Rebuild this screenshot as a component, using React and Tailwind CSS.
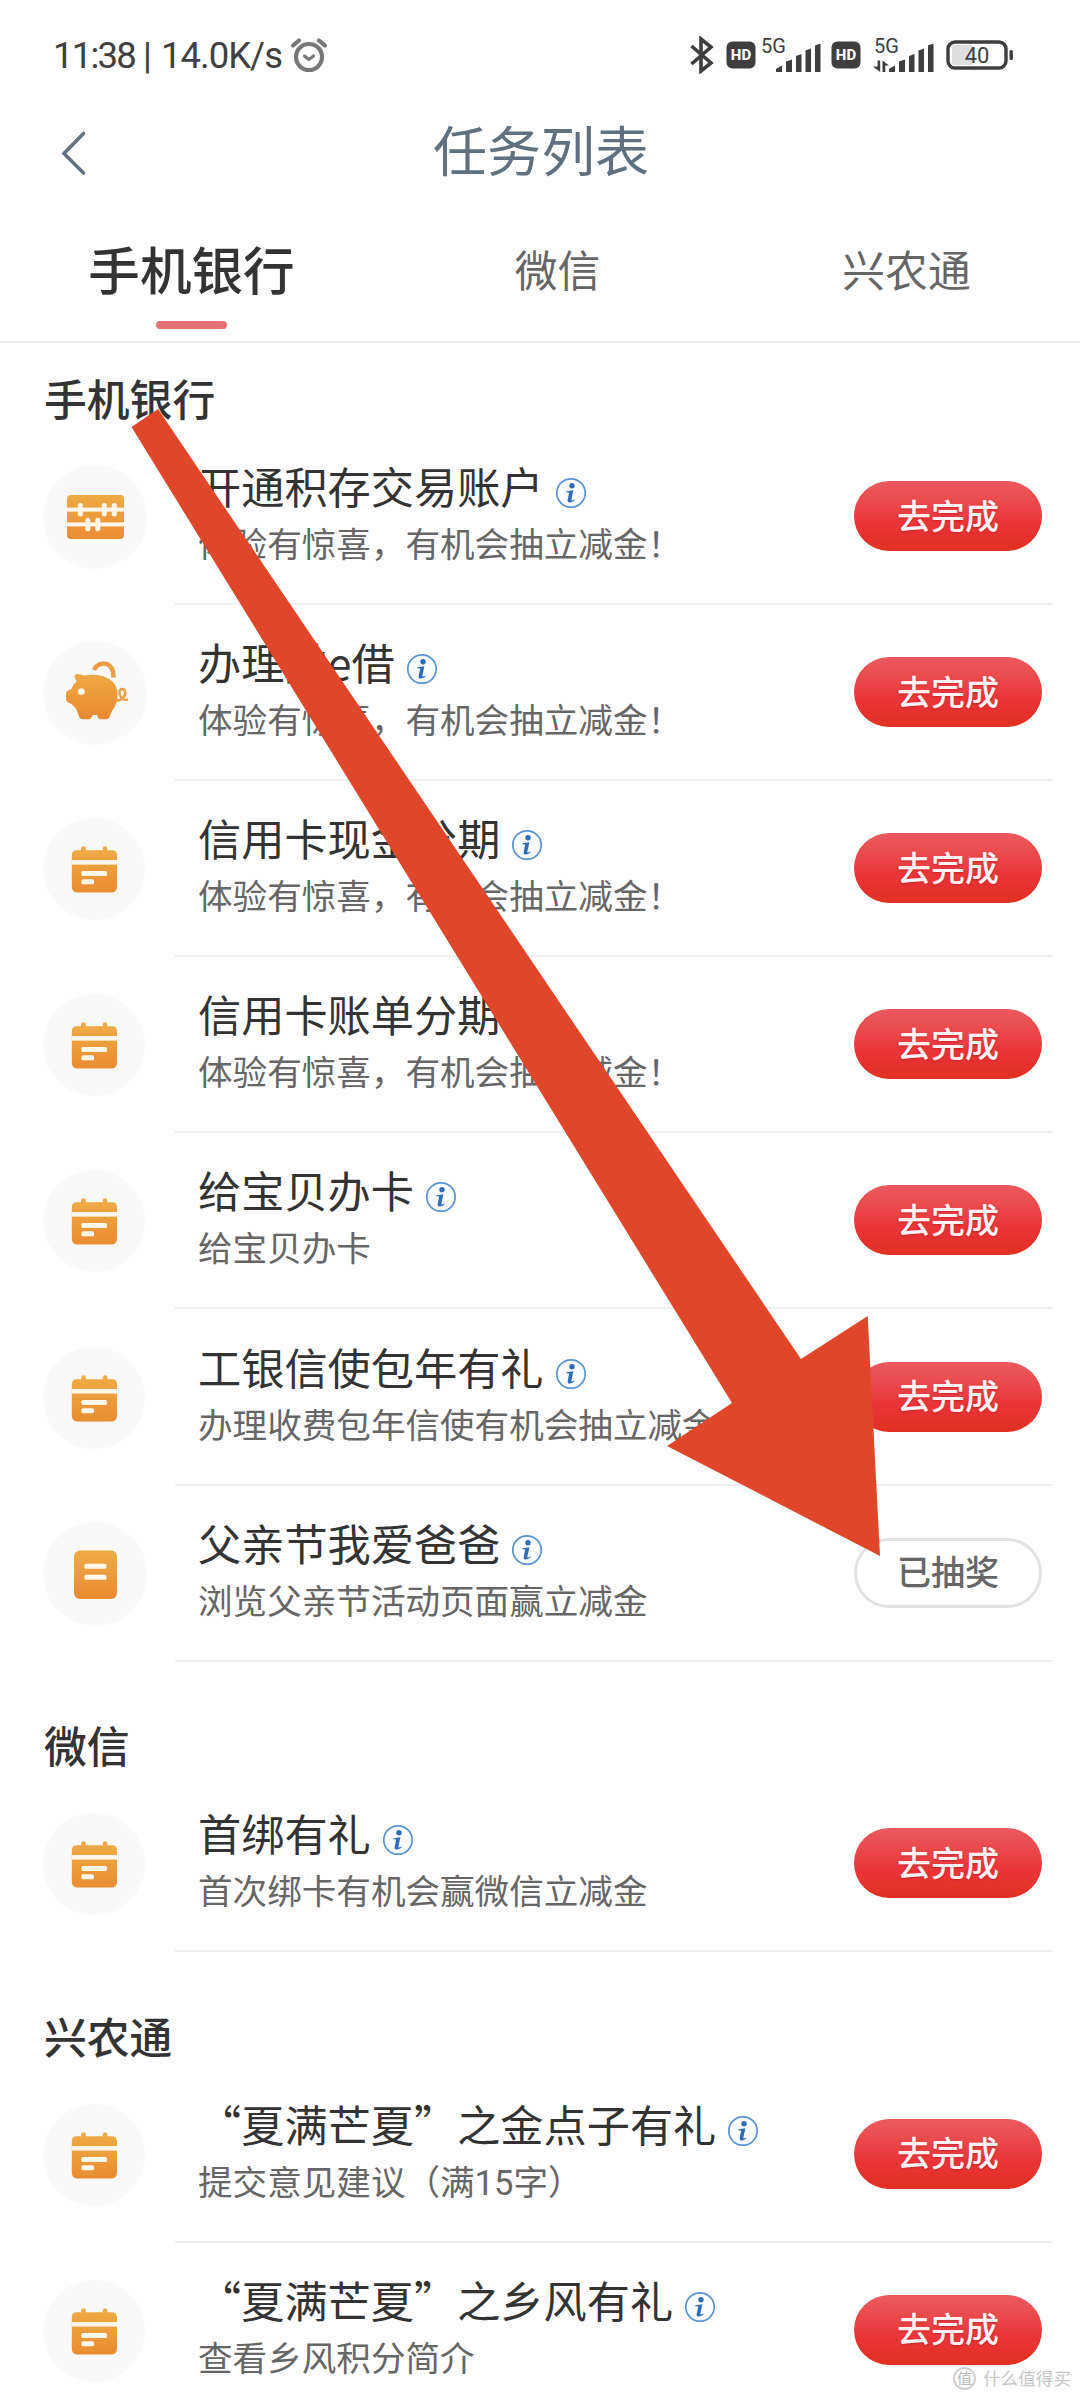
import React, { useState } from "react";

const tabs = [
  { name: "手机银行", width: "w-[382px]" },
  { name: "微信", width: "w-[350px]" },
  { name: "兴农通", width: "w-[348px]" },
];

const sections = [
  {
    title: "手机银行",
    tasks: [
      { icon: "abacus", name: "开通积存交易账户", desc: "体验有惊喜，有机会抽立减金！" },
      { icon: "pig", name: "办理融e借", desc: "体验有惊喜，有机会抽立减金！" },
      { icon: "calendar", name: "信用卡现金分期", desc: "体验有惊喜，有机会抽立减金！" },
      { icon: "calendar", name: "信用卡账单分期", desc: "体验有惊喜，有机会抽立减金！" },
      { icon: "calendar", name: "给宝贝办卡", desc: "给宝贝办卡" },
      { icon: "calendar", name: "工银信使包年有礼", desc: "办理收费包年信使有机会抽立减金" },
      { icon: "doc", name: "父亲节我爱爸爸", desc: "浏览父亲节活动页面赢立减金", done: true },
    ],
  },
  {
    title: "微信",
    tasks: [{ icon: "calendar", name: "首绑有礼", desc: "首次绑卡有机会赢微信立减金" }],
  },
  {
    title: "兴农通",
    tasks: [
      { icon: "calendar", name: "“夏满芒夏”之金点子有礼", desc: "提交意见建议（满15字）" },
      { icon: "calendar", name: "“夏满芒夏”之乡风有礼", desc: "查看乡风积分简介" },
    ],
  },
];

const AlarmIcon = () => (
  <svg width="38" height="38" viewBox="0 0 38 38" fill="none" stroke="#777" strokeWidth="4.2" strokeLinecap="round">
    <circle cx="19" cy="20" r="13" />
    <path d="M3 8.5 L9 3.5 M35 8.5 L29 3.5" />
    <path d="M14.5 19 L18.8 22.6 L23.5 19" strokeWidth="3.2" strokeLinejoin="round" />
  </svg>
);

const HdIcon = () => (
  <svg width="30" height="28" viewBox="0 0 30 28">
    <rect x="0.5" y="0.5" width="29" height="27" rx="6" fill="#3e3e3e" />
    <text x="15" y="19.3" textAnchor="middle" fontSize="15" fontWeight="800" fontFamily="Roboto, sans-serif" fill="#fff">
      HD
    </text>
  </svg>
);

const SignalIcon = ({ data }) => (
  <svg className="overflow-visible" width="60" height="38" viewBox="0 -2 60 38" fill="#3e3e3e">
    <text x="0" y="15" fontSize="20" fontFamily="Roboto, sans-serif">
      5G
    </text>
    {data && (
      <path d="M3.6 22.5h2.6v11.5L-1.2 28.5h4.8z M8.5 22.5L15 27.5h-3.7V34H8.5z" />
    )}
    <path d="M15 34v-3l6-3.5V34z M25 34V23.5l6-2V34z M35 34V18l5.5-2V34z M44.5 34V12.5l5.5-2V34z M54 34V7.5l5.5-2V34z" />
  </svg>
);

const BatteryIcon = () => (
  <svg width="68" height="30" viewBox="0 0 68 30">
    <rect x="6" y="5" width="21" height="20" rx="2" fill="#dedede" />
    <rect x="2" y="2" width="58" height="26" rx="7" fill="none" stroke="#3e3e3e" strokeWidth="3.4" />
    <rect x="63.5" y="10" width="3.4" height="10" rx="1.5" fill="#3e3e3e" />
    <text x="31" y="22.6" textAnchor="middle" fontSize="22" fontFamily="Roboto, sans-serif" fill="#3e3e3e">
      40
    </text>
  </svg>
);

const StatusBar = () => (
  <div className="flex h-[112px] items-center justify-between pl-[53px] pr-[66px]">
    <div className="flex items-center">
      <div className="flex w-[237px] whitespace-nowrap text-[36.5px] text-[#404040]">
        <span className="w-[90px] tracking-[-1.8px]">11:38</span>
        <span className="w-[18px]">|</span>
        <span className="tracking-[-1px]">14.0K/s</span>
      </div>
      <AlarmIcon />
    </div>
    <div className="flex items-center pb-[3px]">
      <svg className="mr-[12px]" width="24" height="38" viewBox="0 0 24 38" fill="none" stroke="#3e3e3e" strokeWidth="3.6">
        <path d="M1.5 10 L21 27 L11 35 V3 L21 11 L1.5 28" />
      </svg>
      <HdIcon />
      <span className="ml-[5px]">
        <SignalIcon />
      </span>
      <span className="ml-[10px]">
        <HdIcon />
      </span>
      <span className="ml-[13px]">
        <SignalIcon data />
      </span>
      <span className="ml-[12px]">
        <BatteryIcon />
      </span>
    </div>
  </div>
);

const InfoIcon = () => (
  <svg width="32" height="32" viewBox="0 0 32 32">
    <circle cx="16" cy="16" r="14.2" fill="#fafdff" stroke="#5b94cf" strokeWidth="1.7" />
    <circle cx="17" cy="8.8" r="2.7" fill="#2f6db8" />
    <path d="M11.5 14.2 L18.4 13.2 L16.3 23 Q16.4 24 19.6 22.4 L19.4 23.6 Q16 26.2 13.6 25.4 Q12.2 24.8 12.7 22.8 L14.2 15.6 L11.3 15.3 Z" fill="#2f6db8" />
  </svg>
);

const Gradient = ({ id }) => (
  <linearGradient id={id} x1="0" y1="25" x2="0" y2="78" gradientUnits="userSpaceOnUse">
    <stop offset="0" stopColor="#efae48" />
    <stop offset="1" stopColor="#e98a30" />
  </linearGradient>
);

const TaskIcon = ({ type }) => {
  if (type === "abacus") {
    return (
      <svg width="104" height="104" viewBox="0 0 104 104">
        <Gradient id="abacus" />
        <circle cx="52" cy="52" r="52" fill="#f9f9f9" />
        <rect x="24" y="30" width="57" height="44" rx="4" fill="url(#abacus)" />
        <g fill="#fff8ea">
          <rect x="24" y="42.6" width="57" height="4" />
          <rect x="24" y="57.4" width="57" height="4" />
          <rect x="34.8" y="38" width="5" height="13.4" rx="2.5" />
          <rect x="58.8" y="38" width="5" height="13.4" rx="2.5" />
          <rect x="68.8" y="38" width="5" height="13.4" rx="2.5" />
          <rect x="42.3" y="52.8" width="5" height="13.4" rx="2.5" />
          <rect x="52.3" y="52.8" width="5" height="13.4" rx="2.5" />
        </g>
      </svg>
    );
  }
  if (type === "pig") {
    return (
      <svg width="104" height="104" viewBox="0 0 104 104">
        <Gradient id="pig" />
        <circle cx="52" cy="52" r="52" fill="#f9f9f9" />
        <path
          d="M31.5 35.5 Q31.5 32.5 35 33 L42 34.5 Q50 33 59 35 Q74 39 74.5 53 Q75 62 69 70 L66.5 76 Q65.7 78.3 63 78.3 H57.5 Q55.3 78.3 54.8 76 L54 74 H49.5 L48.8 76 Q48.2 78.3 46 78.3 H39.5 Q37 78.3 36.3 76 L34 70 Q32.5 66.5 28.5 63 L25 61.5 Q23 60.5 23 58 V52.5 Q23 50 25.5 49.2 L28.5 48 Q30 43 33.5 40.5 Z"
          fill="url(#pig)"
        />
        <circle cx="38.3" cy="50.6" r="3.4" fill="#fff8ea" />
        <path d="M51 29 C54 22 64 20 68.5 27 Q71 31 70.3 36.5" fill="none" stroke="#eb9d43" strokeWidth="4.4" />
        <path d="M73 59.5 C79 60 83 55 82 50.5 C81 47 77 47.5 76.5 51 C76 55 79 60 85 58.5" fill="none" stroke="#eba04b" strokeWidth="2.6" />
      </svg>
    );
  }
  if (type === "doc") {
    return (
      <svg width="104" height="104" viewBox="0 0 104 104">
        <Gradient id="doc" />
        <circle cx="52" cy="52" r="52" fill="#f9f9f9" />
        <rect x="31" y="28.5" width="43" height="48.5" rx="6" fill="url(#doc)" />
        <rect x="41.4" y="41.7" width="22" height="5" rx="1.5" fill="#fff8ea" />
        <rect x="41.4" y="52.7" width="22" height="5" rx="1.5" fill="#fff8ea" />
      </svg>
    );
  }
  return (
    <svg width="102" height="102" viewBox="0 0 102 102">
      <Gradient id="calendar" />
      <circle cx="51" cy="51" r="51" fill="#f9f9f9" />
      <path
        d="M34 32.2 H38.2 V30.6 A2.3 2.3 0 0 1 42.8 30.6 V32.2 H59.8 V30.6 A2.3 2.3 0 0 1 64.4 30.6 V32.2 H69 Q74 32.2 74 37.5 V68.5 Q74 74.5 68 74.5 H34.8 Q28.8 74.5 28.8 68.5 V37.5 Q28.8 32.2 34 32.2 Z"
        fill="url(#calendar)"
      />
      <rect x="28.8" y="42" width="45.2" height="4.6" fill="#fff8ea" />
      <rect x="38.4" y="53" width="25.6" height="5" rx="1.5" fill="#fff8ea" />
      <rect x="38.4" y="61.2" width="12.6" height="5" rx="1.5" fill="#fff8ea" />
    </svg>
  );
};

const TaskRow = ({ task }) => (
  <div className="flex h-[176.1px] shrink-0 pl-[43px] pr-[28px]">
    <div className="flex w-[132px] shrink-0 items-center">
      <TaskIcon type={task.icon} />
    </div>
    <div className="flex flex-1 items-center border-b-2 border-[#eeeeee] pl-[23px] pr-[10px]">
      <div className="flex-1 pb-[4px]">
        <div className="flex h-[60px] items-start">
          <span className="mt-[-4px] whitespace-nowrap text-[43.2px] leading-[60px] text-[#333]">{task.name}</span>
          <span className="ml-[11px] mt-[18px]">
            <InfoIcon />
          </span>
        </div>
        <p className="h-[50px] whitespace-nowrap font-[Roboto,'Noto_Sans_CJK_SC',sans-serif] text-[34.6px] leading-[52px] text-[#666]">
          {task.desc}
        </p>
      </div>
      {task.done ? (
        <button className="h-[70px] w-[188px] shrink-0 rounded-full border-[3px] border-[#e2e2e2] bg-white pb-[3px] text-[34px] font-medium leading-[56px] text-[#666]">
          已抽奖
        </button>
      ) : (
        <button className="h-[70px] w-[188px] shrink-0 rounded-full bg-linear-to-b from-[#ea5a5e] via-[#ea3438] via-60% to-[#e03020] pb-[3px] text-[34px] font-medium leading-[62px] text-[#fff0f2] [text-shadow:0_1px_2px_rgba(150,0,20,0.4)]">
          去完成
        </button>
      )}
    </div>
  </div>
);

const App = () => {
  const [active, setActive] = useState("手机银行");

  return (
    <div
      lang="zh-CN"
      className="relative flex h-[2400px] w-[1080px] flex-col overflow-hidden bg-[#fefefe] font-['Noto_Sans_CJK_SC',sans-serif]"
    >
      <div className="font-[Roboto,sans-serif]">
        <StatusBar />
      </div>

      {/* Header */}
      <div className="grid h-[78px] shrink-0 grid-cols-3 items-center">
        <svg className="ml-[60px] mt-[4px]" width="28" height="46" viewBox="0 0 28 46" fill="none" stroke="#647482" strokeWidth="3.6" strokeLinecap="round">
          <path d="M23.5 3.5 L4 23.5 L23.5 43" />
        </svg>
        <h1 className="whitespace-nowrap pb-[4px] pl-[2px] text-center text-[54px] leading-[74px] text-[#5f7080]">
          任务列表
        </h1>
      </div>

      {/* Tabs */}
      <div className="flex h-[153px] shrink-0 border-b-2 border-[#ebebeb]">
        {tabs.map((tab) => (
          <button
            key={tab.name}
            onClick={() => setActive(tab.name)}
            className={`flex shrink-0 flex-col items-center pl-[1px] pt-[39px] ${tab.width}`}
          >
            {active === tab.name ? (
              <>
                <span className="text-[51.6px] font-medium leading-[78px] text-[#333]">{tab.name}</span>
                <span className="mt-[14px] h-[8px] w-[71px] rounded-full bg-[#e57076]" />
              </>
            ) : (
              <span className="text-[42.8px] leading-[78px] text-[#666]">{tab.name}</span>
            )}
          </button>
        ))}
      </div>

      {/* Task list */}
      {sections.map((section, i) => (
        <div key={section.title} className={i === 0 ? "" : "pt-[28.5px]"}>
          <h2 className="flex h-[86px] items-end pb-[1px] pl-[44px] text-[42.8px] font-medium leading-[62px] text-[#333]">
            {section.title}
          </h2>
          {section.tasks.map((task) => (
            <TaskRow key={task.name} task={task} />
          ))}
        </div>
      ))}

      {/* Arrow pointing to the finished task */}
      <svg className="pointer-events-none absolute left-0 top-0" width="1080" height="2400" viewBox="0 0 1080 2400">
        <polygon points="158,409 801,1359 867.7,1316 880,1556 667,1446 732,1403 131.5,427" fill="#e0472a" />
      </svg>

      {/* Watermark */}
      <div className="absolute bottom-[9px] right-[9px] flex items-center gap-[7px] text-[17.6px] leading-[26px] text-[#c6c6c6]">
        <span className="flex h-[23px] w-[23px] items-center justify-center rounded-full border-2 border-[#d0d0d0] bg-white text-[15px] text-[#b8b8b8]">
          值
        </span>
        <span>什么值得买</span>
      </div>
    </div>
  );
};

export default App;
